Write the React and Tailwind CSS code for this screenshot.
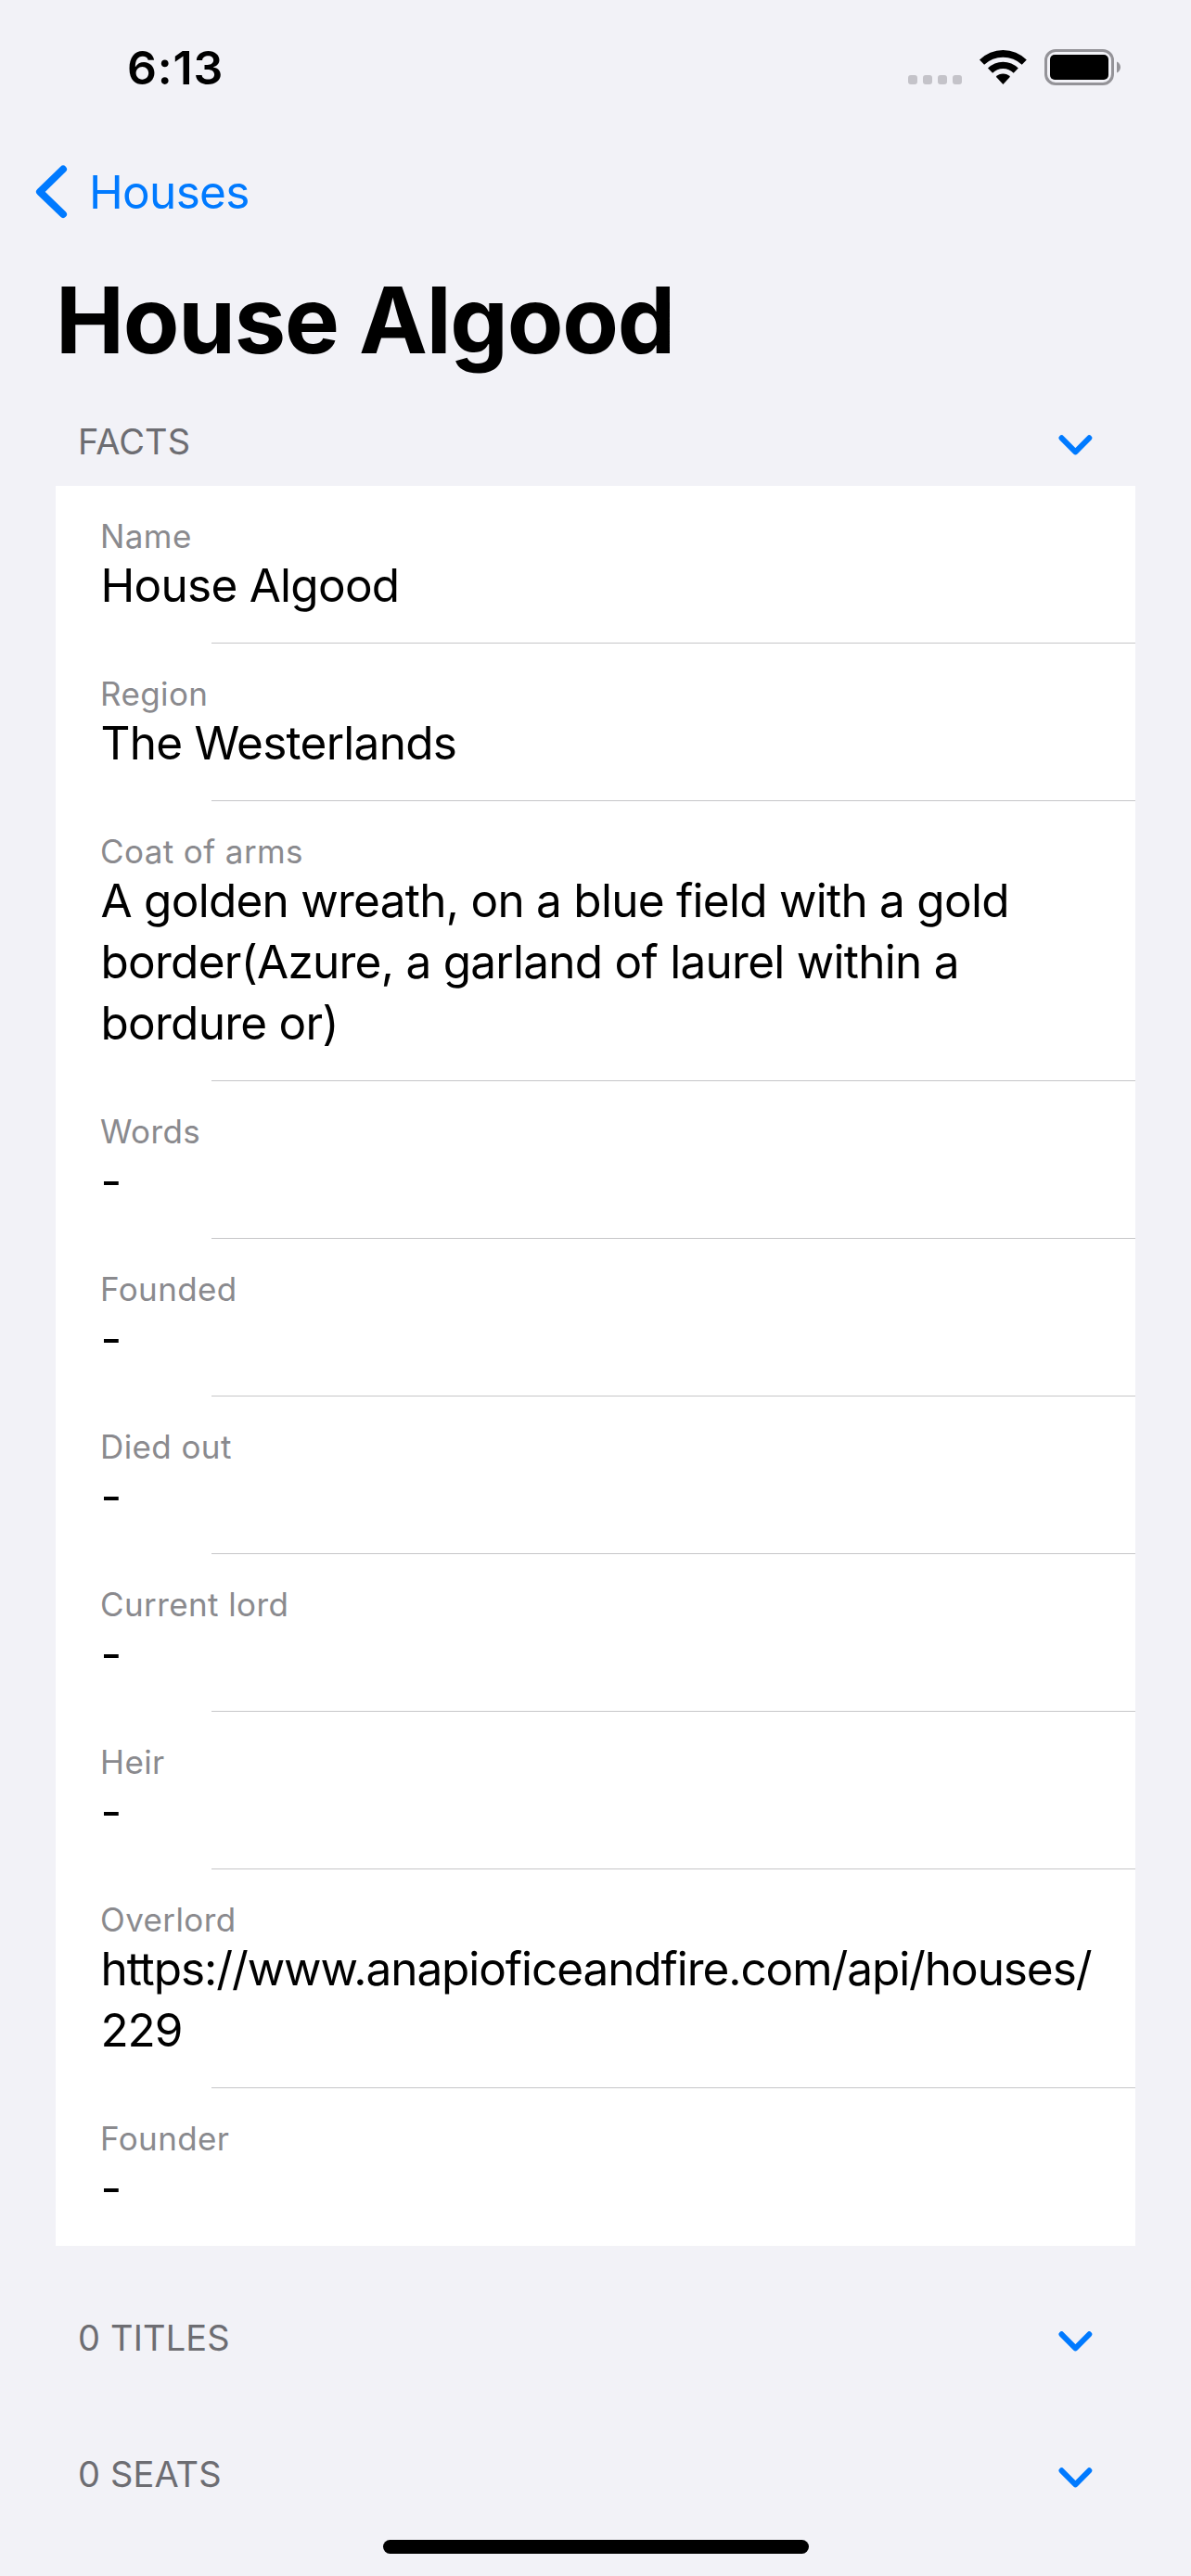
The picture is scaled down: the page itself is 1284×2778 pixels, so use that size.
const facts = [
  { label: "Name", value: "House Algood" },
  { label: "Region", value: "The Westerlands" },
  {
    label: "Coat of arms",
    value:
      "A golden wreath, on a blue field with a gold border(Azure, a garland of laurel within a bordure or)",
  },
  { label: "Words", value: "-" },
  { label: "Founded", value: "-" },
  { label: "Died out", value: "-" },
  { label: "Current lord", value: "-" },
  { label: "Heir", value: "-" },
  {
    label: "Overlord",
    value: "https://www.anapioficeandfire.com/api/houses/229",
    tracking: "tracking-[-1.08px] break-all",
  },
  { label: "Founder", value: "-" },
];

function StatusBar() {
  return (
    <header className="flex h-[146px] items-start justify-between pt-[43px] pr-[75px] pl-[137px]">
      <span className="text-[50px] leading-[60px] font-semibold tracking-[0.8px]">6:13</span>
      <div className="flex pt-[10px]">
        <div className="flex gap-[6px] pt-[28px]">
          <span className="size-[10px] rounded-[3px] bg-[#c4c3c9]" />
          <span className="size-[10px] rounded-[3px] bg-[#c4c3c9]" />
          <span className="size-[10px] rounded-[3px] bg-[#c4c3c9]" />
          <span className="size-[10px] rounded-[3px] bg-[#c4c3c9]" />
        </div>
        <svg className="ml-[18px] h-[39px] w-[53px]" viewBox="0 0 53 39">
          <path d="M1 11.6A35.7 35.7 0 0 1 51.8 11.6L46.7 16.8A29.5 29.5 0 0 0 6.1 16.8Z" />
          <path d="M10 20.6A22.9 22.9 0 0 1 42.8 20.6L37.7 25.8A15.9 15.9 0 0 0 15.1 25.8Z" />
          <path d="M18.8 29.8A10.4 10.4 0 0 1 34 29.8L26.4 38Z" />
        </svg>
        <svg className="ml-[18px] h-[39px] w-[83px]" viewBox="0 0 83 39">
          <rect x="1.5" y="1.5" width="72" height="36" rx="10.5" fill="none" stroke="#949398" strokeWidth="3" />
          <rect x="6" y="6" width="63" height="27" rx="5" />
          <path d="M78 13.5C80.6 14.6 82 17 82 19.5S80.6 24.6 78 25.5Z" fill="#949398" />
        </svg>
      </div>
    </header>
  );
}

function SectionHeader({ title }) {
  return (
    <div className="flex h-[147px] items-start justify-between pr-[46px] pl-[24px]">
      <h2 className="mt-[76px] text-[38px] leading-[46px] tracking-[0.15px] text-[#6d6d72]">{title}</h2>
      <svg
        className="mt-[91px] h-[24px] w-[38px]"
        viewBox="0 0 38 24"
        fill="none"
        stroke="#007aff"
        strokeWidth="6"
        strokeLinecap="round"
        strokeLinejoin="round"
      >
        <path d="M4.5 4.3L19.4 19.3L34.3 4.3" />
      </svg>
    </div>
  );
}

function Fact({ label, value, tracking = "tracking-[-0.74px]", last }) {
  return (
    <li>
      <div className="pt-[34px] pr-[44px] pb-[29px] pl-[48px]">
        <p className="text-[35px] leading-[40px] tracking-[0.4px] text-[#8a8a8e]">{label}</p>
        <p className={`pl-[0.5px] text-[49.5px] leading-[66px] [font-feature-settings:'calt'_0] ${tracking}`}>{value}</p>
      </div>
      <div className={last ? "h-px" : "ml-[168px] h-px bg-[#c6c6c8]"} />
    </li>
  );
}

export default function App() {
  return (
    <div className="flex h-[2778px] w-[1284px] flex-col overflow-hidden bg-[#f2f2f7] font-['Inter',sans-serif] text-black">
      <StatusBar />
      <nav className="flex h-[169px] items-start pl-[38px] text-[#007aff]">
        <svg
          className="mt-[31px] h-[60px] w-[36px]"
          viewBox="0 0 36 60"
          fill="none"
          stroke="currentColor"
          strokeWidth="8"
          strokeLinecap="round"
          strokeLinejoin="round"
        >
          <path d="M30 5.5L5 29.8L30 54" />
        </svg>
        <span className="mt-[31px] ml-[22px] text-[49.5px] leading-[60px] tracking-[-0.7px]">Houses</span>
      </nav>
      <h1 className="h-[62px] pl-[60px] text-[99px] leading-[60px] font-bold tracking-[-1.2px]">House Algood</h1>
      <main className="px-[60px]">
        <SectionHeader title="FACTS" />
        <ul className="bg-white">
          {facts.map((fact, i) => (
            <Fact key={fact.label} {...fact} last={i === facts.length - 1} />
          ))}
        </ul>
        <SectionHeader title="0 TITLES" />
        <SectionHeader title="0 SEATS" />
      </main>
      <div className="mx-auto mt-[23px] h-[15px] w-[459px] shrink-0 rounded-full bg-black" />
    </div>
  );
}
